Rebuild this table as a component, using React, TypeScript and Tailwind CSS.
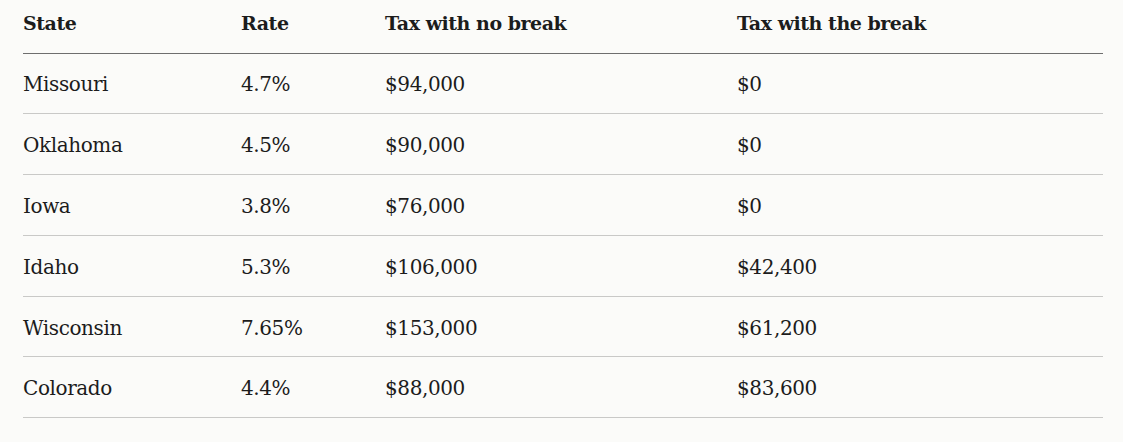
const rows = [
  ['Missouri', '4.7%', '$94,000', '$0'],
  ['Oklahoma', '4.5%', '$90,000', '$0'],
  ['Iowa', '3.8%', '$76,000', '$0'],
  ['Idaho', '5.3%', '$106,000', '$42,400'],
  ['Wisconsin', '7.65%', '$153,000', '$61,200'],
  ['Colorado', '4.4%', '$88,000', '$83,600'],
];

export default function App() {
  return (
    <div className="min-h-[442px] w-full bg-[#fbfbf9] px-[23px] font-['DejaVu_Serif',serif] text-[#1c1c1c]">
      <table className="w-[1080px] table-fixed border-collapse">
        <colgroup>
          <col className="w-[218px]" />
          <col className="w-[144px]" />
          <col className="w-[352px]" />
          <col />
        </colgroup>
        <thead>
          <tr className="h-[53px] border-b border-[#6e6e6e]">
            {['State', 'Rate', 'Tax with no break', 'Tax with the break'].map((h) => (
              <th key={h} className="pb-[6px] text-left align-middle text-[19px] font-bold tracking-[-0.025em]">
                {h}
              </th>
            ))}
          </tr>
        </thead>
        <tbody>
          {rows.map((r) => (
            <tr key={r[0]} className="h-[60.8px] border-b border-[#c9c9c7]">
              {r.map((c, i) => (
                <td key={i} className="pt-[2px] align-middle text-[20px] tracking-[-0.02em]">
                  {c}
                </td>
              ))}
            </tr>
          ))}
        </tbody>
      </table>
    </div>
  );
}
